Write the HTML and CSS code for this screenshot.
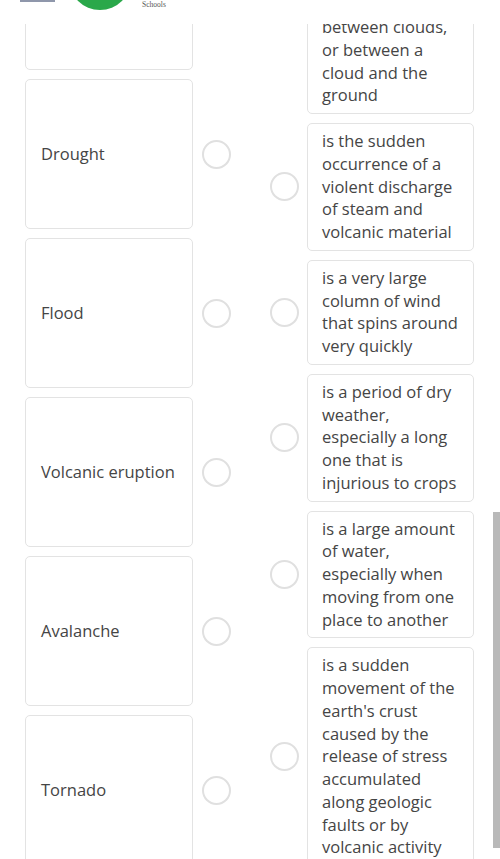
FILE: index.html
```html
<!DOCTYPE html>
<html lang="en">
<head>
    <meta charset="UTF-8">
    <meta name="viewport" content="width=device-width, initial-scale=1.0">
    <title>Match the terms</title>
    <link rel="stylesheet" href="styles.css">
</head>
<body>

<header class="topbar">
    <span class="menu-bar"></span>
    <span class="logo-circle"></span>
    <span class="logo-text">International<br>Schools</span>
</header>

<div class="scroll-thumb"></div>

<main class="board">
    <!-- terms -->
    <div class="column">
        <div class="row term-row">
            <div class="term">Lightning</div>
            <span class="dot"></span>
        </div>
        <div class="row term-row">
            <div class="term">Drought</div>
            <span class="dot"></span>
        </div>
        <div class="row term-row">
            <div class="term">Flood</div>
            <span class="dot"></span>
        </div>
        <div class="row term-row">
            <div class="term">Volcanic eruption</div>
            <span class="dot"></span>
        </div>
        <div class="row term-row">
            <div class="term">Avalanche</div>
            <span class="dot"></span>
        </div>
        <div class="row term-row">
            <div class="term">Tornado</div>
            <span class="dot"></span>
        </div>
    </div>

    <!-- definitions -->
    <div class="column defs">
        <div class="row def-row">
            <span class="dot dot-top"></span>
            <div class="def">is a sudden electrostatic discharge during a thunderstorm, between clouds, or between a cloud and the ground</div>
        </div>
        <div class="row def-row">
            <span class="dot"></span>
            <div class="def">is the sudden occurrence of a violent discharge of steam and volcanic material</div>
        </div>
        <div class="row def-row">
            <span class="dot"></span>
            <div class="def">is a very large column of wind that spins around very quickly</div>
        </div>
        <div class="row def-row">
            <span class="dot"></span>
            <div class="def">is a period of dry weather, especially a long one that is injurious to crops</div>
        </div>
        <div class="row def-row">
            <span class="dot"></span>
            <div class="def">is a large amount of water, especially when moving from one place to another</div>
        </div>
        <div class="row def-row">
            <span class="dot"></span>
            <div class="def">is a sudden movement of the earth's crust caused by the release of stress accumulated along geologic faults or by volcanic activity</div>
        </div>
    </div>
</main>

</body>
</html>
```

FILE: styles.css
```css
body {
    margin: 0;
    background-color: #fff;
    font-family: "Open Sans", "Liberation Sans", sans-serif;
    color: #454545;
    overflow: hidden;
}

/* header, mostly scrolled out of view */
.topbar {
    position: fixed;
    top: 0;
    left: 0;
    right: 0;
    height: 24px;
    background-color: #fff;
    z-index: 5;
    overflow: hidden;
}

.menu-bar {
    position: absolute;
    left: 20px;
    top: 0;
    width: 35px;
    height: 2px;
    background-color: #8f97ab;
}

.logo-circle {
    position: absolute;
    left: 69px;
    top: -52px;
    width: 62px;
    height: 62px;
    border-radius: 50%;
    background-color: #2aa84a;
}

.logo-text {
    position: absolute;
    left: 133px;
    top: -7px;
    width: 42px;
    font-family: "Liberation Serif", serif;
    font-size: 7.5px;
    line-height: 8px;
    color: #555;
    text-align: center;
}

.scroll-thumb {
    position: fixed;
    right: 0;
    top: 512px;
    width: 7px;
    height: 336px;
    background-color: #b9b9b9;
    z-index: 6;
}

/* matching board */
.board {
    display: grid;
    grid-template-columns: 206px 204px;
    column-gap: 39px;
    align-items: start;
    margin-top: -80px;
    padding-left: 25px;
}

.column {
    display: flex;
    flex-direction: column;
    gap: 9px;
}

.defs {
    margin-top: -2px;
}

.row {
    display: flex;
    align-items: center;
}

.term-row {
    gap: 9px;
}

.def-row {
    gap: 8px;
}

.term {
    box-sizing: border-box;
    width: 168px;
    height: 150px;
    padding: 0 15px;
    display: flex;
    align-items: center;
    border: 1px solid #e3e3e3;
    border-radius: 5px;
    font-size: 16.5px;
    line-height: 22.75px;
}

.def {
    box-sizing: border-box;
    width: 167px;
    padding: 6px 14px;
    border: 1px solid #e3e3e3;
    border-radius: 5px;
    font-size: 16.5px;
    line-height: 22.75px;
}

.dot {
    box-sizing: border-box;
    flex-shrink: 0;
    width: 29px;
    height: 29px;
    border: 2px solid #e0e0e0;
    border-radius: 50%;
    background-color: #fff;
}

.dot-top {
    align-self: flex-start;
}
```
